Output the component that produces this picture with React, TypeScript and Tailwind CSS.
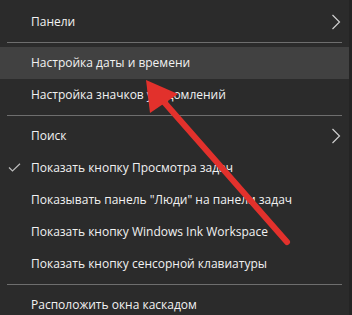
import React from 'react';

type Item =
  | { kind: 'item'; label: string; sub?: boolean; checked?: boolean; active?: boolean }
  | { kind: 'sep' };

const items: Item[] = [
  { kind: 'item', label: 'Панели', sub: true },
  { kind: 'sep' },
  { kind: 'item', label: 'Настройка даты и времени', active: true },
  { kind: 'item', label: 'Настройка значков уведомлений' },
  { kind: 'sep' },
  { kind: 'item', label: 'Поиск', sub: true },
  { kind: 'item', label: 'Показать кнопку Просмотра задач', checked: true },
  { kind: 'item', label: 'Показывать панель "Люди" на панели задач' },
  { kind: 'item', label: 'Показать кнопку Windows Ink Workspace' },
  { kind: 'item', label: 'Показать кнопку сенсорной клавиатуры' },
  { kind: 'sep' },
  { kind: 'item', label: 'Расположить окна каскадом' },
];

function Chevron() {
  return (
    <svg width="10" height="16" viewBox="0 0 10 16" className="shrink-0">
      <path d="M1.5 1 L8.5 8 L1.5 15" fill="none" stroke="#cfcfcf" strokeWidth="1.2" />
    </svg>
  );
}

function Check() {
  return (
    <svg width="14" height="10" viewBox="0 0 14 10">
      <path d="M1 4.5 L4.5 8 L12 0.8" fill="none" stroke="#bdbdbd" strokeWidth="1.2" />
    </svg>
  );
}

export default function App() {
  return (
    <div
      className="relative w-[352px] h-[315px] overflow-hidden bg-[#242424] text-[#f2f2f2] text-[12px]"
      style={{ fontFamily: '"Open Sans", "Noto Sans", "DejaVu Sans", sans-serif' }}
    >
      <div className="w-[349px] h-full pt-[6px] bg-[#2b2b2b]">
        {items.map((it, i) =>
          it.kind === 'sep' ? (
            <div key={i} className="py-[4px] pl-[7px] pr-[7px]">
              <div className="h-px bg-[#6e6e6e]" />
            </div>
          ) : (
            <div
              key={i}
              className={`flex items-center h-[32px] pr-[8px] ${it.active ? 'bg-[#414141]' : ''}`}
            >
              <div className="w-[31px] shrink-0 flex justify-center pl-[1px] pr-[2px]">
                {it.checked && <Check />}
              </div>
              <span className="flex-1 whitespace-nowrap">{it.label}</span>
              {it.sub && <Chevron />}
            </div>
          )
        )}
      </div>

      <svg
        className="absolute left-0 top-0 pointer-events-none"
        width="352"
        height="315"
        viewBox="0 0 352 315"
      >
        <line x1="164" y1="102" x2="287" y2="242" stroke="#e2312c" strokeWidth="6" strokeLinecap="round" />
        <polygon points="146,80 178,94 150,113" fill="#e2312c" />
      </svg>
    </div>
  );
}
